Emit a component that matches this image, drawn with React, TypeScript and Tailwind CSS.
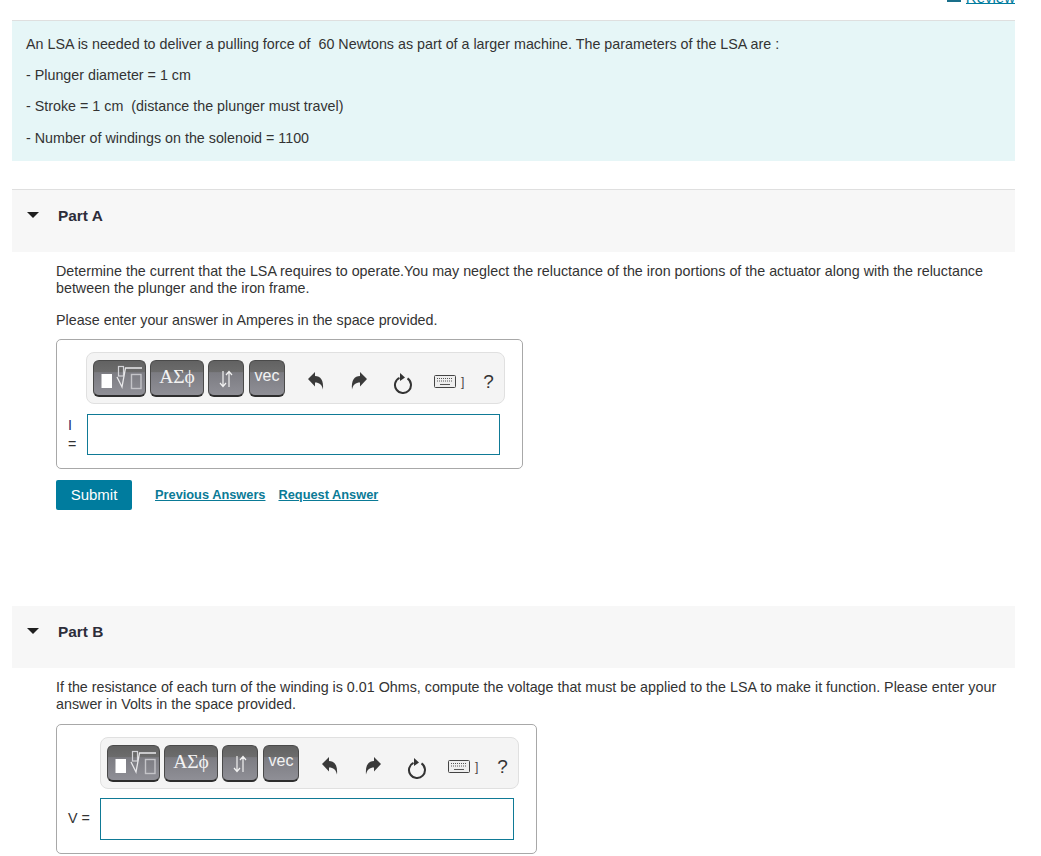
const font = "font-['Liberation_Sans',Arial,sans-serif]";

const MathButton = ({ className, children }: { className: string; children: React.ReactNode }) => (
  <div
    className={`flex h-[37px] items-center justify-center rounded-[6px] border border-[#4a4a4a] border-b-2 border-b-[#2e2e2e] bg-[linear-gradient(#626262_0,#6c6c6c_33%,#7c7c82_34%,#8f8f96_100%)] text-white ${className}`}
  >
    {children}
  </div>
);

const UndoIcon = ({ className }: { className: string }) => (
  <svg className={className} width="16" height="18" viewBox="0 0 16 18">
    <path d="M0 7L7 0v4c5.500 0 8.800 4 8 13.500C13.800 12.500 11.500 10.500 7 10.500V14.500z" fill="#3a3a3a" />
  </svg>
);

const RedoIcon = ({ className }: { className: string }) => (
  <svg className={className} width="16" height="18" viewBox="0 0 16 18">
    <path d="M16 7L9 0v4C3.500 4 .2 8 1 17.500 2.200 12.500 4.500 10.500 9 10.500V14.500z" fill="#3a3a3a" />
  </svg>
);

const Toolbar = ({ className }: { className: string }) => (
  <div
    className={`flex h-[52px] w-[419px] items-center rounded-[8px] border border-[#e0e0e0] bg-[#f4f4f4] pl-[6px] ${className}`}
  >
    <MathButton className="w-[53px]">
      <svg width="51" height="34" viewBox="0 0 51 34" fill="none" className="shrink-0">
        <rect x="7.500" y="13" width="10.500" height="14" fill="#fff" />
        <rect x="37.500" y="13.500" width="9.500" height="14" stroke="#c4c4c8" strokeWidth="1.400" />
        <rect x="24.500" y="5.500" width="5" height="9.500" stroke="#d4d4d8" strokeWidth="1.200" />
        <path d="M23 16l5 10 3.500-19h16.500" stroke="#e8e8ea" strokeWidth="1.300" />
      </svg>
    </MathButton>
    <MathButton className="ml-[4px] w-[54px]">
      <span className="-mt-[1px] font-['Liberation_Serif',serif] text-[19.500px] text-[#f2f2f2]">ΑΣϕ</span>
    </MathButton>
    <MathButton className="ml-[4px] w-[36px]">
      <svg className="mt-[2px]" width="16" height="18" viewBox="0 0 16 18" fill="none" stroke="#f2f2f2" strokeWidth="1.200">
        <path d="M5 1v15M2 13l3 3.500 3-3.500M11 17V2M8 5l3-3.500 3 3.500" />
      </svg>
    </MathButton>
    <MathButton className="ml-[5px] w-[36px]">
      <span className={`-mt-[4px] text-[16px] text-[#f2f2f2] ${font}`}>vec</span>
    </MathButton>
    <UndoIcon className="ml-[23px] mt-[6px]" />
    <RedoIcon className="ml-[27px] mt-[6px]" />
    <svg className="ml-[26px] mt-[9px]" width="20" height="22" viewBox="0 0 20 22" fill="none">
      <path d="M6.500 5.800a8 8 0 1 0 8 .6" stroke="#333" strokeWidth="2" />
      <path d="M7 1l5 4.500-5 3.500z" fill="#333" />
    </svg>
    <svg className="ml-[21px] mt-[7px]" width="23" height="14" viewBox="0 0 23 14" fill="none">
      <rect x="0.500" y="0.500" width="21" height="12" rx="1" fill="#eee" stroke="#444" />
      <path d="M3 3.500h16M3 6h16" stroke="#555" strokeDasharray="1 1" />
      <path d="M6 9.500h10" stroke="#555" />
    </svg>
    <span className={`ml-[4px] mt-[7px] text-[12px] text-[#444] ${font}`}>]</span>
    <span className={`ml-[19px] mt-[9px] text-[19px] text-[#333] ${font}`}>?</span>
  </div>
);

const PartHeader = ({ title, className }: { title: string; className?: string }) => (
  <div className={`flex h-[62px] items-center bg-[#f7f7f7] pb-[11px] pl-[15px] ${className || ""}`}>
    <svg width="12" height="6" viewBox="0 0 12 6" className="mt-[-1px]">
      <path d="M0 0h12L6 6z" fill="#1f1f1f" />
    </svg>
    <span className="ml-[19px] text-[15.400px] font-bold text-[#2d2d3a]">{title}</span>
  </div>
);

export default function App() {
  return (
    <div className={`h-[856px] w-[1041px] overflow-hidden bg-white text-[14.300px] text-[#333] ${font}`}>
      {/* clipped review link */}
      <div className="flex h-[4px] items-end justify-end overflow-hidden pr-[26px]">
        <div className="mb-[2px] mr-[5px] h-[3px] w-[14px] shrink-0 bg-[#1a6f8a]" />
        <span className="shrink-0 border-b border-[#007c9e] text-[15px] leading-[10px] text-[#007c9e]">Review</span>
      </div>

      <div className="ml-[12px] mt-[16px] h-[141px] w-[1003px] border-t border-[#dfdfdf] bg-[#e6f6f7] pl-[14px] pt-[15px]">
        <p className="leading-[17px]">
          An LSA is needed to deliver a pulling force of&nbsp; 60 Newtons as part of a larger machine. The parameters of the LSA are :
        </p>
        <p className="mt-[14px] leading-[17px]">- Plunger diameter = 1 cm</p>
        <p className="mt-[14px] leading-[17px]">- Stroke = 1 cm&nbsp; (distance the plunger must travel)</p>
        <p className="mt-[15px] leading-[17px]">- Number of windings on the solenoid = 1100</p>
      </div>

      <div className="ml-[12px] mt-[28px] w-[1003px]">
        <div className="border-t border-[#dfdfdf]">
          <PartHeader title="Part A" />
        </div>
        <div className="pl-[44px] pt-[11px]">
          <p className="w-[945px] leading-[17px]">
            Determine the current that the LSA requires to operate.You may neglect the reluctance of the iron portions of the actuator along with the reluctance between the plunger and the iron frame.
          </p>
          <p className="mt-[15px] leading-[17px]">Please enter your answer in Amperes in the space provided.</p>

          <div className="mt-[10px] h-[130px] w-[467px] rounded-[5px] border border-[#a8a8a8] pt-[12px]">
            <Toolbar className="ml-[29px]" />
            <div className="mt-[10px] flex items-center">
              <div className="ml-[11px] w-[19px] leading-[19px]">
                <span className="text-[#2a2a6a]">I</span>
                <br />=
              </div>
              <div className="h-[41px] w-[413px] border border-[#0f7a96] bg-white" />
            </div>
          </div>

          <div className="mt-[11px] flex items-center">
            <div className="flex h-[30px] w-[76px] items-center justify-center rounded-[2px] bg-[#007c9e] text-[15px] text-white">
              Submit
            </div>
            <span className="ml-[23px] text-[12.800px] font-bold text-[#0a7a96] underline">Previous Answers</span>
            <span className="ml-[13px] text-[12.800px] font-bold text-[#0a7a96] underline">Request Answer</span>
          </div>
        </div>

        <PartHeader title="Part B" className="mt-[96px]" />
        <div className="pl-[44px] pt-[11px]">
          <p className="w-[945px] leading-[17px]">
            If the resistance of each turn of the winding is 0.01 Ohms, compute the voltage that must be applied to the LSA to make it function. Please enter your answer in Volts in the space provided.
          </p>
          <div className="mt-[11px] h-[130px] w-[481px] rounded-[5px] border border-[#a8a8a8] pt-[12px]">
            <Toolbar className="ml-[43px]" />
            <div className="mt-[9px] flex items-center">
              <div className="ml-[11px] w-[32px]">V =</div>
              <div className="h-[42px] w-[414px] border border-[#0f7a96] bg-white" />
            </div>
          </div>
        </div>
      </div>
    </div>
  );
}
